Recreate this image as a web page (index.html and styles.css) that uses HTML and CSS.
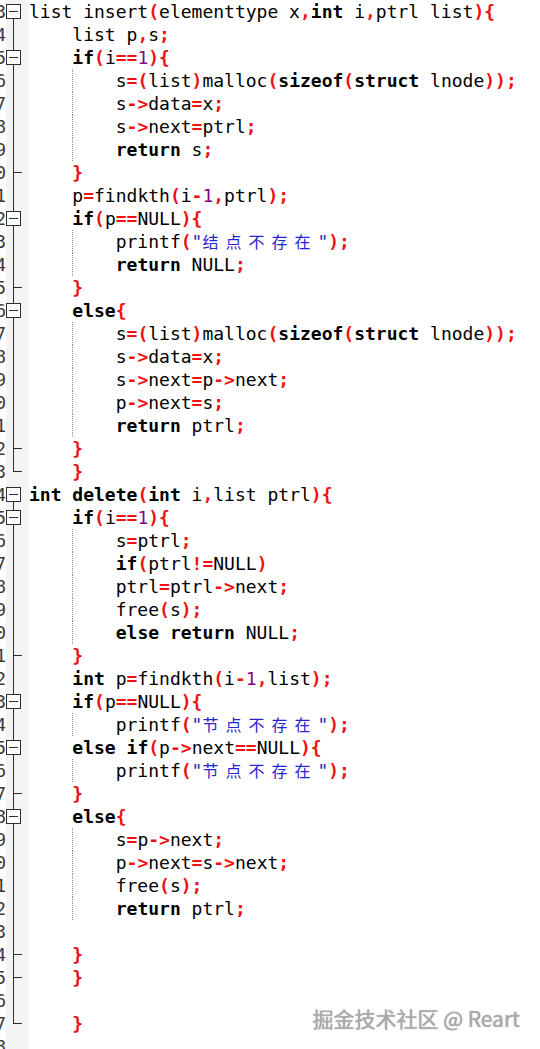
FILE: index.html
```html
<!DOCTYPE html>
<html lang="zh-CN">
<head>
<meta charset="utf-8">
<title>list.c</title>
<link rel="stylesheet" href="styles.css">
</head>
<body>
<div class="editor">
<div class="line"><span class="num">13</span><span class="fold box first"><span class="bx"></span></span><span class="mg"></span><span class="code">list insert<b class="o">(</b>elementtype x<b class="o">,</b><b class="k">int</b> i<b class="o">,</b>ptrl list<b class="o">){</b></span></div>
<div class="line"><span class="num">14</span><span class="fold mid"></span><span class="mg"></span><span class="code">    list p<b class="o">,</b>s<b class="o">;</b></span></div>
<div class="line"><span class="num">15</span><span class="fold box"><span class="bx"></span></span><span class="mg"></span><span class="code">    <b class="k">if</b><b class="o">(</b>i<b class="o">==</b><span class="n">1</span><b class="o">){</b></span></div>
<div class="line"><span class="num">16</span><span class="fold mid"></span><span class="mg"></span><span class="code g">        s<b class="o">=(</b>list<b class="o">)</b>malloc<b class="o">(</b><b class="k">sizeof</b><b class="o">(</b><b class="k">struct</b> lnode<b class="o">));</b></span></div>
<div class="line"><span class="num">17</span><span class="fold mid"></span><span class="mg"></span><span class="code g">        s<b class="o">-&gt;</b>data<b class="o">=</b>x<b class="o">;</b></span></div>
<div class="line"><span class="num">18</span><span class="fold mid"></span><span class="mg"></span><span class="code g">        s<b class="o">-&gt;</b>next<b class="o">=</b>ptrl<b class="o">;</b></span></div>
<div class="line"><span class="num">19</span><span class="fold mid"></span><span class="mg"></span><span class="code g">        <b class="k">return</b> s<b class="o">;</b></span></div>
<div class="line"><span class="num">20</span><span class="fold tee"></span><span class="mg"></span><span class="code">    <b class="o">}</b></span></div>
<div class="line"><span class="num">21</span><span class="fold mid"></span><span class="mg"></span><span class="code">    p<b class="o">=</b>findkth<b class="o">(</b>i<b class="o">-</b><span class="n">1</span><b class="o">,</b>ptrl<b class="o">);</b></span></div>
<div class="line"><span class="num">22</span><span class="fold box"><span class="bx"></span></span><span class="mg"></span><span class="code">    <b class="k">if</b><b class="o">(</b>p<b class="o">==</b>NULL<b class="o">){</b></span></div>
<div class="line"><span class="num">23</span><span class="fold mid"></span><span class="mg"></span><span class="code g">        printf<b class="o">(</b><span class="s">"<span class="cj">结点不存在</span>"</span><b class="o">);</b></span></div>
<div class="line"><span class="num">24</span><span class="fold mid"></span><span class="mg"></span><span class="code g">        <b class="k">return</b> NULL<b class="o">;</b></span></div>
<div class="line"><span class="num">25</span><span class="fold tee"></span><span class="mg"></span><span class="code">    <b class="o">}</b></span></div>
<div class="line"><span class="num">26</span><span class="fold box"><span class="bx"></span></span><span class="mg"></span><span class="code">    <b class="k">else</b><b class="o">{</b></span></div>
<div class="line"><span class="num">27</span><span class="fold mid"></span><span class="mg"></span><span class="code g">        s<b class="o">=(</b>list<b class="o">)</b>malloc<b class="o">(</b><b class="k">sizeof</b><b class="o">(</b><b class="k">struct</b> lnode<b class="o">));</b></span></div>
<div class="line"><span class="num">28</span><span class="fold mid"></span><span class="mg"></span><span class="code g">        s<b class="o">-&gt;</b>data<b class="o">=</b>x<b class="o">;</b></span></div>
<div class="line"><span class="num">29</span><span class="fold mid"></span><span class="mg"></span><span class="code g">        s<b class="o">-&gt;</b>next<b class="o">=</b>p<b class="o">-&gt;</b>next<b class="o">;</b></span></div>
<div class="line"><span class="num">30</span><span class="fold mid"></span><span class="mg"></span><span class="code g">        p<b class="o">-&gt;</b>next<b class="o">=</b>s<b class="o">;</b></span></div>
<div class="line"><span class="num">31</span><span class="fold mid"></span><span class="mg"></span><span class="code g">        <b class="k">return</b> ptrl<b class="o">;</b></span></div>
<div class="line"><span class="num">32</span><span class="fold tee"></span><span class="mg"></span><span class="code">    <b class="o">}</b></span></div>
<div class="line"><span class="num">33</span><span class="fold end"></span><span class="mg"></span><span class="code">    <b class="o">}</b></span></div>
<div class="line"><span class="num">34</span><span class="fold box first"><span class="bx"></span></span><span class="mg"></span><span class="code"><b class="k">int</b> <b class="k">delete</b><b class="o">(</b><b class="k">int</b> i<b class="o">,</b>list ptrl<b class="o">){</b></span></div>
<div class="line"><span class="num">35</span><span class="fold box"><span class="bx"></span></span><span class="mg"></span><span class="code">    <b class="k">if</b><b class="o">(</b>i<b class="o">==</b><span class="n">1</span><b class="o">){</b></span></div>
<div class="line"><span class="num">36</span><span class="fold mid"></span><span class="mg"></span><span class="code g">        s<b class="o">=</b>ptrl<b class="o">;</b></span></div>
<div class="line"><span class="num">37</span><span class="fold mid"></span><span class="mg"></span><span class="code g">        <b class="k">if</b><b class="o">(</b>ptrl<b class="o">!=</b>NULL<b class="o">)</b></span></div>
<div class="line"><span class="num">38</span><span class="fold mid"></span><span class="mg"></span><span class="code g">        ptrl<b class="o">=</b>ptrl<b class="o">-&gt;</b>next<b class="o">;</b></span></div>
<div class="line"><span class="num">39</span><span class="fold mid"></span><span class="mg"></span><span class="code g">        free<b class="o">(</b>s<b class="o">);</b></span></div>
<div class="line"><span class="num">40</span><span class="fold mid"></span><span class="mg"></span><span class="code g">        <b class="k">else</b> <b class="k">return</b> NULL<b class="o">;</b></span></div>
<div class="line"><span class="num">41</span><span class="fold tee"></span><span class="mg"></span><span class="code">    <b class="o">}</b></span></div>
<div class="line"><span class="num">42</span><span class="fold mid"></span><span class="mg"></span><span class="code">    <b class="k">int</b> p<b class="o">=</b>findkth<b class="o">(</b>i<b class="o">-</b><span class="n">1</span><b class="o">,</b>list<b class="o">);</b></span></div>
<div class="line"><span class="num">43</span><span class="fold box"><span class="bx"></span></span><span class="mg"></span><span class="code">    <b class="k">if</b><b class="o">(</b>p<b class="o">==</b>NULL<b class="o">){</b></span></div>
<div class="line"><span class="num">44</span><span class="fold mid"></span><span class="mg"></span><span class="code g">        printf<b class="o">(</b><span class="s">"<span class="cj">节点不存在</span>"</span><b class="o">);</b></span></div>
<div class="line"><span class="num">45</span><span class="fold box"><span class="bx"></span></span><span class="mg"></span><span class="code">    <b class="k">else</b> <b class="k">if</b><b class="o">(</b>p<b class="o">-&gt;</b>next<b class="o">==</b>NULL<b class="o">){</b></span></div>
<div class="line"><span class="num">46</span><span class="fold mid"></span><span class="mg"></span><span class="code g">        printf<b class="o">(</b><span class="s">"<span class="cj">节点不存在</span>"</span><b class="o">);</b></span></div>
<div class="line"><span class="num">47</span><span class="fold tee"></span><span class="mg"></span><span class="code">    <b class="o">}</b></span></div>
<div class="line"><span class="num">48</span><span class="fold box"><span class="bx"></span></span><span class="mg"></span><span class="code">    <b class="k">else</b><b class="o">{</b></span></div>
<div class="line"><span class="num">49</span><span class="fold mid"></span><span class="mg"></span><span class="code g">        s<b class="o">=</b>p<b class="o">-&gt;</b>next<b class="o">;</b></span></div>
<div class="line"><span class="num">50</span><span class="fold mid"></span><span class="mg"></span><span class="code g">        p<b class="o">-&gt;</b>next<b class="o">=</b>s<b class="o">-&gt;</b>next<b class="o">;</b></span></div>
<div class="line"><span class="num">51</span><span class="fold mid"></span><span class="mg"></span><span class="code g">        free<b class="o">(</b>s<b class="o">);</b></span></div>
<div class="line"><span class="num">52</span><span class="fold mid"></span><span class="mg"></span><span class="code g">        <b class="k">return</b> ptrl<b class="o">;</b></span></div>
<div class="line"><span class="num">53</span><span class="fold mid"></span><span class="mg"></span><span class="code"></span></div>
<div class="line"><span class="num">54</span><span class="fold tee"></span><span class="mg"></span><span class="code">    <b class="o">}</b></span></div>
<div class="line"><span class="num">55</span><span class="fold tee"></span><span class="mg"></span><span class="code">    <b class="o">}</b></span></div>
<div class="line"><span class="num">56</span><span class="fold mid"></span><span class="mg"></span><span class="code"></span></div>
<div class="line"><span class="num">57</span><span class="fold end"></span><span class="mg"></span><span class="code">    <b class="o">}</b></span></div>
<div class="line"><span class="num">58</span><span class="fold"></span><span class="mg"></span><span class="code"></span></div>
</div>
<div class="watermark">掘金技术社区 @ Reart</div>
</body>
</html>
```
FILE: styles.css
```css
html, body {
  margin: 0;
  padding: 0;
  background: #ffffff;
  overflow: hidden;
}

body {
  position: relative;
  height: 1049px;
  font-family: "DejaVu Sans Mono", "Liberation Mono", monospace;
  font-size: 18px;
  color: #000;
}

.editor {
  display: flex;
  flex-direction: column;
}

.line {
  display: flex;
  height: 23px;
  line-height: 23px;
}

.num {
  flex: none;
  width: 6px;
  overflow: hidden;
  display: flex;
  justify-content: flex-end;
  color: #3a3a3a;
  background: #ffffff;
}

.fold {
  flex: none;
  width: 16px;
  height: 23px;
  background: #f4f4f4;
}

.mg {
  flex: none;
  width: 7px;
  background: #f4f4f4;
}

.code {
  flex: 1;
  white-space: pre;
  padding-left: 0;
}

/* fold markers */
.fold.mid {
  background: linear-gradient(#2e2e2e, #2e2e2e) 7px 0 / 1px 100% no-repeat, #f4f4f4;
}

.fold.tee {
  background:
    linear-gradient(#2e2e2e, #2e2e2e) 7px 11px / 9px 1px no-repeat,
    linear-gradient(#2e2e2e, #2e2e2e) 7px 0 / 1px 100% no-repeat,
    #f4f4f4;
}

.fold.end {
  background:
    linear-gradient(#2e2e2e, #2e2e2e) 7px 11px / 9px 1px no-repeat,
    linear-gradient(#2e2e2e, #2e2e2e) 7px 0 / 1px 12px no-repeat,
    #f4f4f4;
}

.fold.box {
  display: flex;
  align-items: flex-start;
  background: linear-gradient(#2e2e2e, #2e2e2e) 7px 0 / 1px 100% no-repeat, #f4f4f4;
}

.fold.box.first {
  background: linear-gradient(#2e2e2e, #2e2e2e) 7px 18px / 1px 5px no-repeat, #f4f4f4;
}

.bx {
  display: block;
  width: 13px;
  height: 13px;
  margin-top: 4px;
  border: 1px solid #2e2e2e;
  background: linear-gradient(#2e2e2e, #2e2e2e) 2px 6px / 9px 1px no-repeat, #ffffff;
}

/* indent guide */
.code.g {
  background: repeating-linear-gradient(to bottom, #8c8c8c 0 1px, transparent 1px 2px) 43px 0 / 1px 100% no-repeat;
}

/* syntax */
.k {
  font-weight: bold;
  color: #000;
}

.o {
  font-weight: bold;
  color: #ee1111;
}

.n {
  color: #880088;
}

.s {
  color: #2828b8;
}

.cj {
  font-family: "Noto Sans CJK SC", sans-serif;
  font-size: 16px;
  letter-spacing: 7px;
  color: #2626d0;
}

.watermark {
  position: absolute;
  right: 20px;
  top: 1004px;
  font-family: "Noto Sans CJK SC", "Noto Sans", sans-serif;
  font-size: 21px;
  line-height: 28px;
  color: #ababab;
  text-shadow: 0 0 1px rgba(0, 0, 0, 0.45);
  white-space: pre;
}
```
